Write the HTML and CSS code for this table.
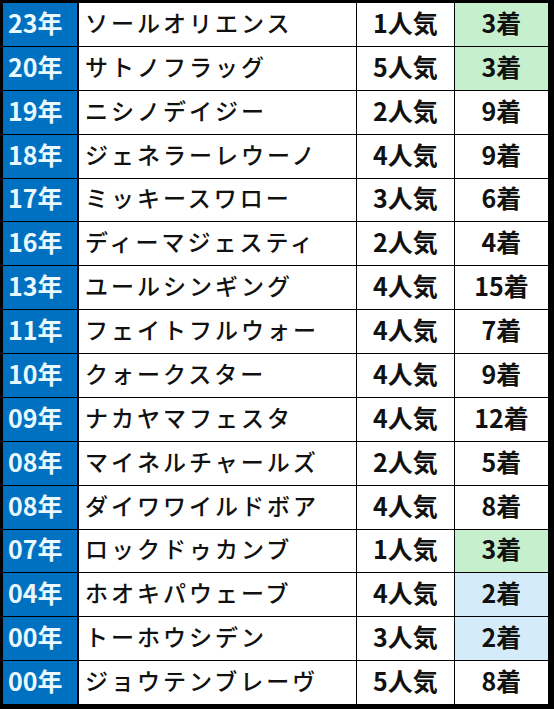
FILE: index.html
```html
<!DOCTYPE html>
<html lang="ja">
<head>
<meta charset="utf-8">
<link rel="stylesheet" href="styles.css">
</head>
<body>
<div class="table">
  <div class="c year">23年</div><div class="c name">ソールオリエンス</div><div class="c pop">1人気</div><div class="c res green">3着</div>
  <div class="c year">20年</div><div class="c name">サトノフラッグ</div><div class="c pop">5人気</div><div class="c res green">3着</div>
  <div class="c year">19年</div><div class="c name">ニシノデイジー</div><div class="c pop">2人気</div><div class="c res">9着</div>
  <div class="c year">18年</div><div class="c name">ジェネラーレウーノ</div><div class="c pop">4人気</div><div class="c res">9着</div>
  <div class="c year">17年</div><div class="c name">ミッキースワロー</div><div class="c pop">3人気</div><div class="c res">6着</div>
  <div class="c year">16年</div><div class="c name">ディーマジェスティ</div><div class="c pop">2人気</div><div class="c res">4着</div>
  <div class="c year">13年</div><div class="c name">ユールシンギング</div><div class="c pop">4人気</div><div class="c res">15着</div>
  <div class="c year">11年</div><div class="c name">フェイトフルウォー</div><div class="c pop">4人気</div><div class="c res">7着</div>
  <div class="c year">10年</div><div class="c name">クォークスター</div><div class="c pop">4人気</div><div class="c res">9着</div>
  <div class="c year">09年</div><div class="c name">ナカヤマフェスタ</div><div class="c pop">4人気</div><div class="c res">12着</div>
  <div class="c year">08年</div><div class="c name">マイネルチャールズ</div><div class="c pop">2人気</div><div class="c res">5着</div>
  <div class="c year">08年</div><div class="c name">ダイワワイルドボア</div><div class="c pop">4人気</div><div class="c res">8着</div>
  <div class="c year">07年</div><div class="c name">ロックドゥカンブ</div><div class="c pop">1人気</div><div class="c res green">3着</div>
  <div class="c year">04年</div><div class="c name">ホオキパウェーブ</div><div class="c pop">4人気</div><div class="c res blue">2着</div>
  <div class="c year">00年</div><div class="c name">トーホウシデン</div><div class="c pop">3人気</div><div class="c res blue">2着</div>
  <div class="c year">00年</div><div class="c name">ジョウテンブレーヴ</div><div class="c pop">5人気</div><div class="c res">8着</div>
</div>
</body>
</html>
```
FILE: styles.css
```css
html, body {
  margin: 0;
  padding: 0;
  background: #000;
}
.table {
  box-sizing: border-box;
  width: 554px;
  height: 709px;
  background: #000;
  padding: 3px 5px 5px 3px;
  display: grid;
  grid-template-columns: 75px 277px 97px 93px;
  grid-template-rows: repeat(16, 1fr);
  column-gap: 1px;
  row-gap: 1px;
  font-family: "Noto Sans CJK JP", "Noto Sans", sans-serif;
  color: #111;
}
.c {
  display: flex;
  align-items: center;
  background: #fff;
  overflow: hidden;
  line-height: 1;
  padding-bottom: 4px;
  box-sizing: border-box;
}
.year {
  background: #0070c0;
  color: #eaf8ff;
  font-weight: 700;
  font-size: 25px;
  padding-left: 5px;
  margin-right: 1px;
}
.name {
  font-size: 23px;
  font-weight: 500;
  letter-spacing: 3px;
  padding-left: 6px;
}
.pop, .res {
  justify-content: center;
  font-weight: 700;
  font-size: 25px;
}
.green {
  background: #c6efce;
}
.blue {
  background: #d4ecf9;
}
```
